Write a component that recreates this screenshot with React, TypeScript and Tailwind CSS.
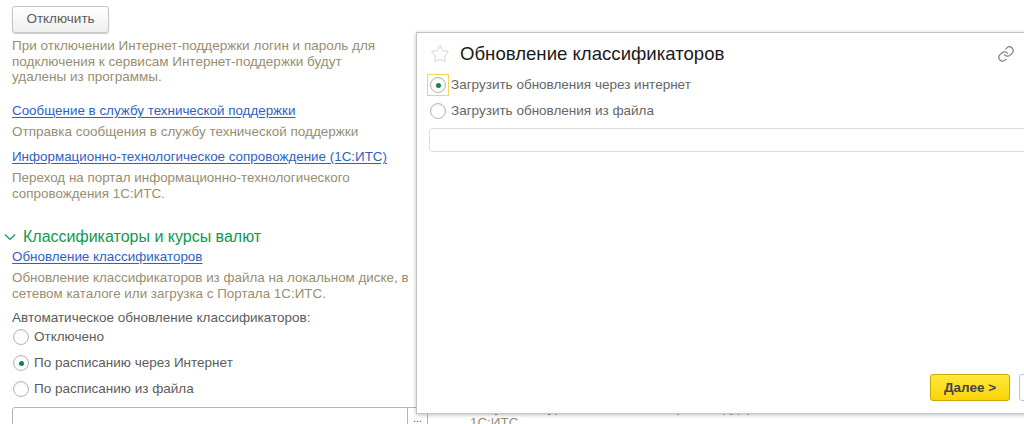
import { Star } from "lucide-react";

const FONT = "[font-family:'Liberation_Sans',Arial,sans-serif]";

function Radio({ checked = false }: { checked?: boolean }) {
  return (
    <span className="flex h-[16px] w-[16px] shrink-0 items-center justify-center rounded-full border border-[#b5b5b5] bg-white shadow-[inset_0_1px_2px_rgba(0,0,0,0.08)]">
      {checked && <span className="h-[5px] w-[5px] rounded-full bg-[#0a8a47]" />}
    </span>
  );
}

function RadioRow({ label, checked }: { label: string; checked?: boolean }) {
  return (
    <div className="flex h-[26px] items-center gap-[5px] pl-[1px] text-[13.5px] text-[#5c5c5c]">
      <Radio checked={checked} />
      <span>{label}</span>
    </div>
  );
}

function Hint({ children, className = "" }: { children: React.ReactNode; className?: string }) {
  return <p className={`leading-[15.5px] text-[#978e72] ${className}`}>{children}</p>;
}

function DocLink({ children, className = "" }: { children: React.ReactNode; className?: string }) {
  return (
    <a className={`block text-[13.4px] leading-[16px] text-[#2f62bf] underline underline-offset-2 ${className}`}>
      {children}
    </a>
  );
}

function UpdateDialog() {
  return (
    <div className="absolute left-[416px] top-[32px] flex h-[382px] w-[700px] flex-col border border-[#c4c4c4] bg-white pl-[12px] shadow-[0_1px_4px_rgba(0,0,0,0.25)]">
      {/* Title */}
      <div className="flex h-[39px] items-center pt-[3px]">
        <Star size={20} strokeWidth={1} className="ml-[1px] text-[#c8c8c8]" />
        <h2 className="ml-[10px] text-[18.6px] text-[#1a1a1a]">Обновление классификаторов</h2>
      </div>

      <div className="flex h-[26px] items-center text-[13.5px] text-[#666666]">
        <span className="-ml-[2px] flex h-[22px] w-[22px] shrink-0 items-center justify-center border border-[#f2d75c]">
          <Radio checked />
        </span>
        <span className="ml-[2px]">Загрузить обновления через интернет</span>
      </div>
      <div className="flex h-[26px] items-center gap-[5px] pl-[1px] text-[13.5px] text-[#666666]">
        <Radio />
        <span>Загрузить обновления из файла</span>
      </div>
      <div className="mt-[4px] h-[24px] rounded-[3px] border border-[#dcdcdc] bg-white" />

      {/* Footer */}
      <div className="mt-auto mb-[12px] flex gap-[9px] pl-[501px]">
        <button className="h-[27px] w-[80px] shrink-0 rounded-[3px] border border-[#c9a800] bg-gradient-to-b from-[#ffe838] to-[#fbd300] pt-[1px] text-[13.5px] font-bold text-[#444444]">
          Далее &gt;
        </button>
        <button className="h-[27px] w-[80px] shrink-0 rounded-[3px] border border-[#c4c4c4] bg-white" />
      </div>

      <svg
        viewBox="0 0 24 24"
        className="absolute left-[580px] top-[12px] h-[18px] w-[18px] text-[#7d7d7d]"
        fill="none"
        stroke="currentColor"
        strokeWidth="1.6"
        strokeLinecap="round"
      >
        <path d="M10 13a5 5 0 0 0 7.5.5l3-3a5 5 0 0 0-7-7l-1.7 1.7" />
        <path d="M14 11a5 5 0 0 0-7.5-.5l-3 3a5 5 0 0 0 7 7l1.7-1.7" />
      </svg>
    </div>
  );
}

export default function App() {
  return (
    <div className={`relative flex h-[424px] w-[1024px] overflow-hidden bg-white ${FONT}`}>
      <div className="w-[428px] shrink-0 pl-[12px] pt-[6px]">
        <button className="h-[27px] w-[97px] rounded-[3px] border border-[#c6c6c6] bg-gradient-to-b from-white to-[#efefef] text-[13.5px] text-[#5c5c5c] shadow-[0_1px_1px_rgba(0,0,0,0.2)]">
          Отключить
        </button>
        <Hint className="mt-[5px] w-[368px] text-[13.5px]">
          При отключении Интернет-поддержки логин и пароль для подключения к сервисам Интернет-поддержки будут удалены из программы.
        </Hint>
        <DocLink className="mt-[18px]">Сообщение в службу технической поддержки</DocLink>
        <Hint className="mt-[5px] text-[13.5px]">Отправка сообщения в службу технической поддержки</Hint>
        <DocLink className="mt-[10px]">Информационно-технологическое сопровождение (1С:ИТС)</DocLink>
        <Hint className="mt-[5px] w-[390px] text-[13.4px]">
          Переход на портал информационно-технологического сопровождения 1С:ИТС.
        </Hint>

        <div className="-ml-[8px] mt-[26px] flex h-[20px] items-center gap-[7px] text-[16px] text-[#0d9a50]">
          <svg viewBox="0 0 12 8" className="h-[8px] w-[12px]" fill="none" stroke="currentColor" strokeWidth="1.2">
            <path d="M1 1.5 6 6.5 11 1.5" />
          </svg>
          <span>Классификаторы и курсы валют</span>
        </div>
        <DocLink className="mt-[2px]">Обновление классификаторов</DocLink>
        <Hint className="mt-[5px] w-[405px] text-[13.4px]">
          Обновление классификаторов из файла на локальном диске, в сетевом каталоге или загрузка с Портала 1С:ИТС.
        </Hint>
        <p className="mt-[10px] text-[13.5px] leading-[13px] text-[#5c5c5c]">Автоматическое обновление классификаторов:</p>
        <RadioRow label="Отключено" />
        <RadioRow label="По расписанию через Интернет" checked />
        <RadioRow label="По расписанию из файла" />
        <div className="mt-[5px] flex h-[30px] w-[416px] rounded-t-[3px] border border-[#b5b5b5]">
          <div className="flex-1" />
          <div className="flex w-[20px] justify-center border-l border-[#b5b5b5] pt-[4px] text-[11px] leading-[12px] text-[#555555]">...</div>
        </div>
      </div>

      <div className="flex-1 pl-[42px] pt-[400px]">
        <Hint className="text-[13.4px]">Получение курсов валют из Интернет-поддержки</Hint>
        <Hint className="-mt-[1px] text-[13.4px]">1С:ИТС</Hint>
      </div>

      <UpdateDialog />
    </div>
  );
}
